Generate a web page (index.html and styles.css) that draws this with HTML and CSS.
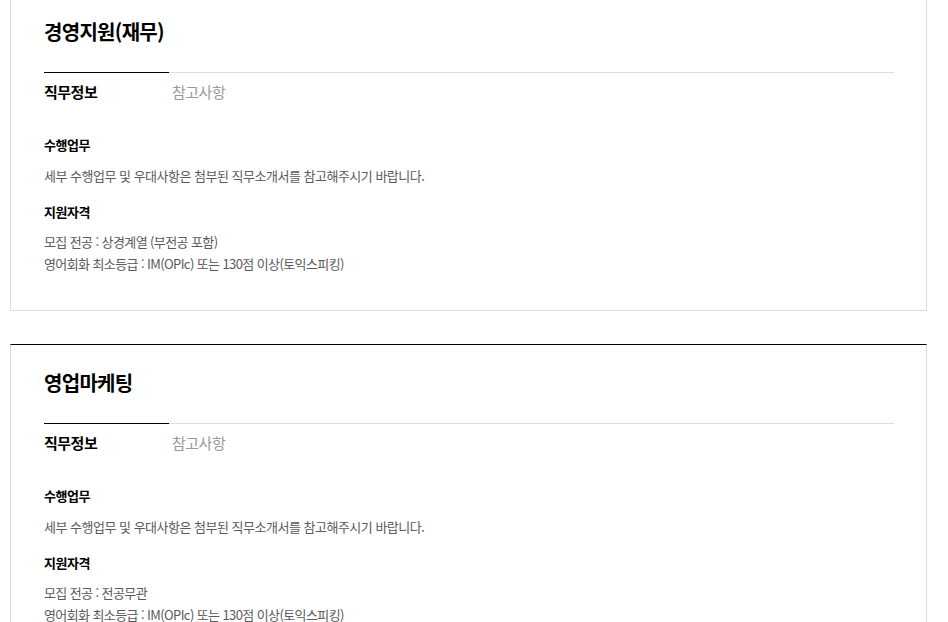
FILE: index.html
```html
<!DOCTYPE html>
<html lang="ko">
<head>
    <meta charset="UTF-8">
    <meta name="viewport" content="width=device-width, initial-scale=1.0">
    <title>채용 직무</title>
    <link rel="stylesheet" href="styles.css">
</head>
<body>
    <div class="job-list">
        <div class="job-card">
            <h2 class="job-title">경영지원(재무)</h2>
            <ul class="tabs">
                <li class="tab active">직무정보</li>
                <li class="tab">참고사항</li>
            </ul>
            <div class="tab-content">
                <h3>수행업무</h3>
                <p class="desc">세부 수행업무 및 우대사항은 첨부된 직무소개서를 참고해주시기 바랍니다.</p>
                <h3>지원자격</h3>
                <ul class="req">
                    <li>모집 전공 : 상경계열 (부전공 포함)</li>
                    <li>영어회화 최소등급 : IM(OPIc) 또는 130점 이상(토익스피킹)</li>
                </ul>
            </div>
        </div>

        <div class="job-card">
            <h2 class="job-title">영업마케팅</h2>
            <ul class="tabs">
                <li class="tab active">직무정보</li>
                <li class="tab">참고사항</li>
            </ul>
            <div class="tab-content">
                <h3>수행업무</h3>
                <p class="desc">세부 수행업무 및 우대사항은 첨부된 직무소개서를 참고해주시기 바랍니다.</p>
                <h3>지원자격</h3>
                <ul class="req">
                    <li>모집 전공 : 전공무관</li>
                    <li>영어회화 최소등급 : IM(OPIc) 또는 130점 이상(토익스피킹)</li>
                </ul>
            </div>
        </div>
    </div>
</body>
</html>
```

FILE: styles.css
```css
body {
    font-family: "Noto Sans CJK KR", "Noto Sans", sans-serif;
    margin: 0;
    background-color: #fff;
    color: #000;
}
.job-list {
    margin: -7px 21px 0 10px;
}
.job-card {
    border: 1px solid #ddd;
    border-top-color: #000;
    padding: 0 32px 35px 33px;
    margin-bottom: 33px;
}
.job-title {
    margin: 0;
    padding-top: 25px;
    font-size: 20px;
    line-height: 26px;
    font-weight: 700;
    letter-spacing: -0.7px;
}
.tabs {
    display: flex;
    list-style: none;
    margin: 27px 0 0 0;
    padding: 0;
    border-top: 1px solid #ddd;
}
.tab {
    width: 125px;
    margin: -1px 3px 0 0;
    padding-top: 9px;
    border-top: 1px solid transparent;
    font-size: 15px;
    line-height: 20px;
    letter-spacing: -0.5px;
    color: #999;
}
.tab.active {
    border-top-color: #000;
    color: #000;
    font-weight: 700;
}
.tab-content h3 {
    margin: 33px 0 0 0;
    font-size: 13px;
    line-height: 20px;
    font-weight: 700;
    letter-spacing: -0.5px;
}
.tab-content h3 + .desc {
    margin: 10px 0 0 0;
}
.desc {
    font-size: 13px;
    line-height: 22px;
    letter-spacing: -0.5px;
    color: #5a5a5a;
}
.desc + h3 {
    margin-top: 15px;
}
.req {
    list-style: none;
    margin: 9px 0 0 0;
    padding: 0;
    font-size: 13px;
    line-height: 22px;
    letter-spacing: -0.6px;
    color: #5a5a5a;
}
```
